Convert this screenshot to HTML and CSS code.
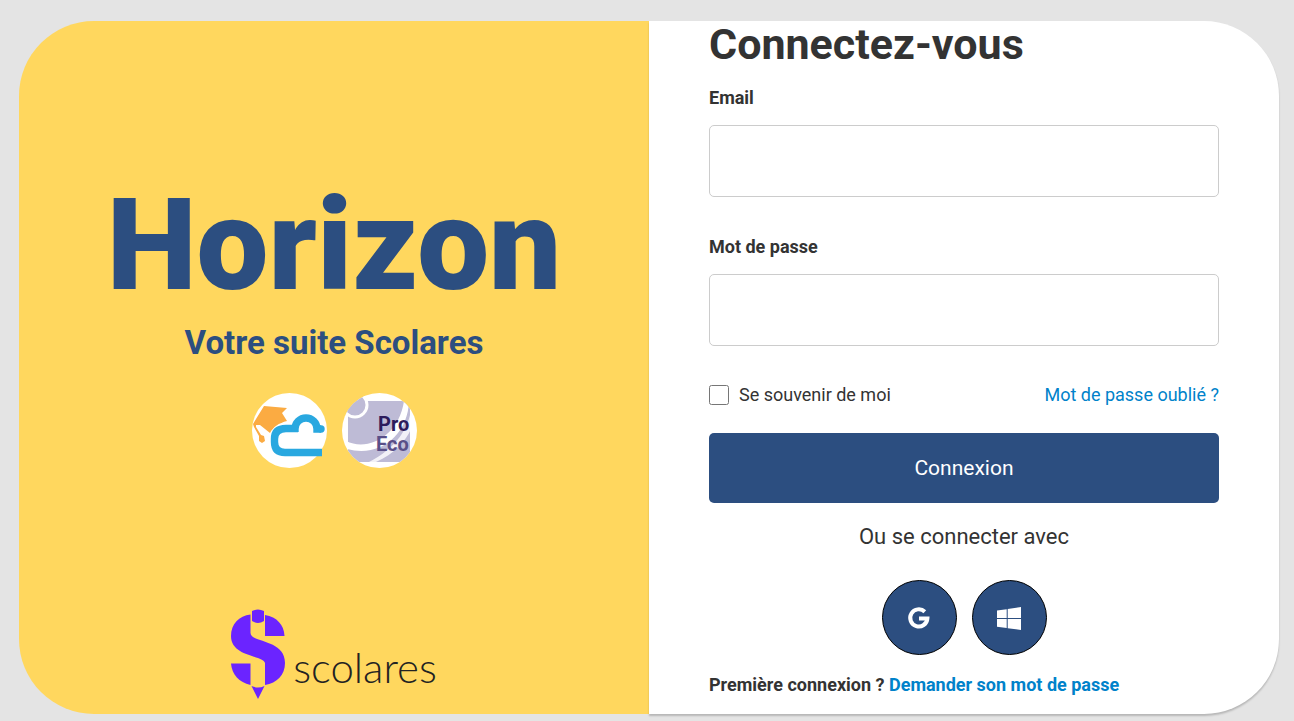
FILE: index.html
```html
<!DOCTYPE html>
<html lang="fr">
<head>
<meta charset="utf-8">
<meta name="viewport" content="width=device-width, initial-scale=1">
<title>Horizon - Connexion</title>
<link rel="stylesheet" href="styles.css">
</head>
<body>
<main class="card">
  <section class="brand">
    <div class="intro">
      <h1 class="wordmark">Horizon</h1>
      <p class="tagline">Votre suite Scolares</p>
      <div class="products">
        <svg class="product" viewBox="0 0 75 75" role="img" aria-label="Cloud">
          <circle cx="37.500" cy="37.500" r="37.500" fill="#fff"/>
          <path d="M12 13L35 15L30 20L35 28C27 30 21 34 18 40L8 32L4 32V34L9 42L12 43L13 48L10 50L7 48L7 43L2 34L1 31Z" fill="#fbab42"/>
          <path d="M70 59.500H33Q22.500 59.500 22.500 49V46Q22.500 35.500 34 35.500H46" fill="none" stroke="#29a8e0" stroke-width="7.400"/>
          <path d="M43 39V36A11 11 0 0 1 65 36H69" fill="none" stroke="#29a8e0" stroke-width="7.400"/>
          <circle cx="69" cy="36" r="3.700" fill="#29a8e0"/>
        </svg>
        <svg class="product" viewBox="0 0 75 75" role="img" aria-label="ProEco">
          <defs><clipPath id="disc"><circle cx="37.500" cy="37.500" r="37.500"/></clipPath></defs>
          <g clip-path="url(#disc)">
            <rect width="75" height="75" fill="#fff"/>
            <path d="M6 8H68V69H6Z" fill="#bebbd6"/>
            <circle cx="13" cy="12" r="12" fill="#bebbd6" stroke="#fff" stroke-width="3"/>
            <path d="M4 48C26 59 57 43 62 8L67 8C66 42 38 65 5 56Z" fill="#fff"/>
            <path d="M68 22C63 44 45 60 27 69L34 69C52 61 64 48 69 36Z" fill="#fff" opacity=".8"/>
          </g>
          <text class="pro" x="36" y="38">Pro</text>
          <text class="eco" x="34" y="58">Eco</text>
        </svg>
      </div>
    </div>
    <div class="publisher">
      <svg class="pencil" viewBox="0 0 54 90" aria-hidden="true">
        <g fill="#6b24ff">
          <path d="M21 2Q27-1 33 2V12Q27 16 21 12Z"/>
          <path d="M19.500 5.500V24C20 34 54 30 54 54C54 66 46 74 34 76V54C32 46 0 48 0 27C0 15 8 7 19.500 5.500Z"/>
          <path d="M34 6C46 8 53 16 53.500 27H34Z"/>
          <path d="M0 54.500H19.500V76C8 73 1 66 0 54.500Z"/>
          <path d="M20.500 77Q27 80 33.500 77L27 90Z"/>
        </g>
      </svg>
      <span class="publisher-name">scolares</span>
    </div>
  </section>
  <section class="login">
    <h2 class="title">Connectez-vous</h2>
    <form>
      <label class="label" for="email">Email</label>
      <input class="field" id="email" type="email">
      <label class="label" for="password">Mot de passe</label>
      <input class="field" id="password" type="password">
      <div class="options">
        <label class="remember" for="remember"><input class="check" id="remember" type="checkbox">Se souvenir de moi</label>
        <a class="link" href="#">Mot de passe oublié ?</a>
      </div>
      <button class="submit" type="submit">Connexion</button>
    </form>
    <p class="alternative">Ou se connecter avec</p>
    <div class="providers">
      <button class="provider" type="button" aria-label="Google">
        <svg class="provider-icon" viewBox="0 0 24 24" aria-hidden="true"><path d="M17.800 5.700A8.600 8.600 0 1 0 20.400 12.500H12" fill="none" stroke="#fff" stroke-width="4"/></svg>
      </button>
      <button class="provider" type="button" aria-label="Windows">
        <svg class="provider-icon" viewBox="0 0 24 24" aria-hidden="true"><path d="M0 4.500L9.700 3.200V12H0ZM10.700 3L24 1V12H10.700ZM0 13H9.700V22L0 20.700ZM10.700 13H24V24L10.700 22.200Z" fill="#fff"/></svg>
      </button>
    </div>
    <p class="first">Première connexion ? <a class="link" href="#">Demander son mot de passe</a></p>
  </section>
</main>
</body>
</html>
```
FILE: styles.css
```css
* { box-sizing: border-box; }
body {
  margin: 0;
  padding: 21px 15px 7px 19px;
  min-height: 100vh;
  display: flex;
  background: #e4e4e4;
  color: #333;
  font-family: Roboto, sans-serif;
  font-size: 18px;
  line-height: 24px;
}
h1, h2, p { margin: 0; }
.card { flex: 1; display: grid; grid-template-columns: 1fr 1fr; }
.brand {
  display: flex;
  flex-direction: column;
  align-items: center;
  justify-content: space-between;
  padding: 152px 24px 15px;
  border-radius: 75px 0 0 75px;
  background: #ffd75e;
  color: #2c4e80;
}
.intro { display: flex; flex-direction: column; align-items: center; }
.wordmark {
  font-family: Roboto, sans-serif;
  font-size: 128px;
  line-height: 144px;
  font-weight: 900;
}
.tagline {
  margin-top: 8px;
  font-size: 33px;
  line-height: 36px;
  font-weight: 700;
}
.products { display: flex; gap: 15px; margin-top: 32px; }
.product { width: 75px; height: 75px; }
.pro, .eco { font-family: Roboto, sans-serif; font-size: 20px; font-weight: 700; }
.pro { fill: #2c1c5c; }
.eco { fill: #594f88; }
.publisher { display: flex; align-items: flex-end; gap: 8px; color: #222; }
.pencil { width: 54px; height: 90px; }
.publisher-name {
  padding-bottom: 10px;
  font-family: Lato, sans-serif;
  font-size: 42px;
  line-height: 44px;
  font-weight: 300;
}
.login {
  padding: 0 60px 16px;
  border-radius: 0 75px 75px 0;
  background: #fff;
  box-shadow: 0 2px 2px rgba(0, 0, 0, .2);
}
.title { font-size: 43px; line-height: 46px; font-weight: 700; }
.label { display: block; margin: 19px 0 15px; font-weight: 700; }
.field {
  display: block;
  width: 100%;
  height: 72px;
  margin-bottom: 37px;
  padding: 0 16px;
  border: 1px solid #ccc;
  border-radius: 5px;
  background: #fff;
  font: inherit;
}
.field + .label { margin-top: 38px; }
.options { display: flex; align-items: center; justify-content: space-between; }
.remember { display: flex; align-items: center; gap: 10px; }
.check { width: 20px; height: 20px; margin: 0; }
.link { color: #0082ca; text-decoration: none; }
.submit {
  display: block;
  width: 100%;
  height: 70px;
  margin-top: 26px;
  border: 0;
  border-radius: 5px;
  background: #2c4e80;
  color: #fff;
  font: inherit;
  font-size: 21px;
}
.alternative { margin-top: 20px; font-size: 22px; line-height: 28px; text-align: center; }
.providers { display: flex; justify-content: center; gap: 15px; margin-top: 29px; }
.provider {
  display: grid;
  place-items: center;
  width: 75px;
  height: 75px;
  padding: 0;
  border: 1px solid #000;
  border-radius: 50%;
  background: #2c4e80;
}
.provider-icon { width: 24px; height: 24px; }
.first { margin-top: 18px; font-weight: 700; }
```
